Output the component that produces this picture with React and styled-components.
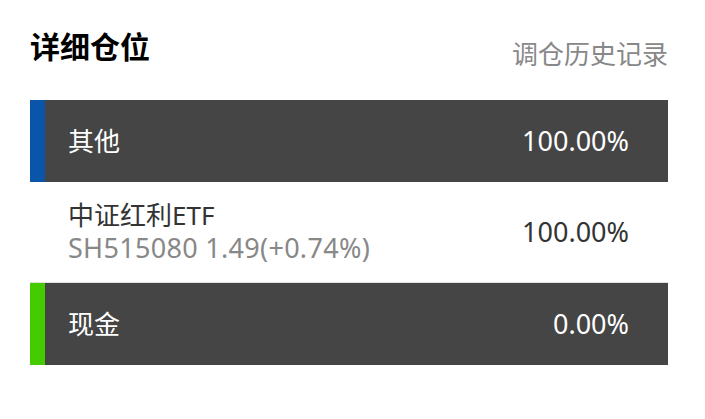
import React from 'react';
import styled, { createGlobalStyle } from 'styled-components';

const GlobalStyle = createGlobalStyle`
  html, body {
    margin: 0;
    padding: 0;
    background: #ffffff;
  }
  body {
    font-family: "Noto Sans", "Noto Sans CJK SC", sans-serif;
  }
`;

const Page = styled.div`
  width: 705px;
  height: 419px;
  padding: 0 37px 0 30px;
  box-sizing: border-box;
  background: #fff;
`;

const Header = styled.div`
  display: flex;
  justify-content: space-between;
  align-items: flex-start;
  height: 100px;
  padding-top: 32px;
  box-sizing: border-box;
`;

const Title = styled.h2`
  margin: 0;
  font-size: 30px;
  line-height: 30px;
  font-weight: 700;
  color: #000;
`;

const HistoryLink = styled.a`
  margin-top: 9px;
  font-size: 26px;
  line-height: 26px;
  color: #888;
  text-decoration: none;
  cursor: pointer;
`;

const GroupRow = styled.div`
  display: flex;
  align-items: center;
  justify-content: space-between;
  height: 82px;
  padding: 0 39px 0 23px;
  background: #454545;
  border-left: 15px solid ${(p) => p.$accent};
  color: #fff;
  font-size: 26px;
  line-height: 32px;
`;

const StockRow = styled.div`
  display: flex;
  align-items: center;
  justify-content: space-between;
  height: 101px;
  padding: 0 39px 0 38px;
  box-sizing: border-box;
  border-bottom: 1px solid #e0e0e0;
  color: #333;
  font-size: 26px;
  line-height: 32px;
`;

const StockInfo = styled.div`
  display: flex;
  flex-direction: column;
`;

const StockName = styled.span`
  color: #333;
  line-height: 31px;
`;

const StockQuote = styled.span`
  color: #888;
  font-size: 27px;
  line-height: 33px;
  letter-spacing: 0.3px;
`;

const Percent = styled.span`
  font-size: 27px;
`;

const groups = [
  {
    name: '其他',
    accent: '#0a55a9',
    percent: '100.00%',
    stocks: [
      { name: '中证红利ETF', quote: 'SH515080 1.49(+0.74%)', percent: '100.00%' },
    ],
  },
  { name: '现金', accent: '#44cc00', percent: '0.00%', stocks: [] },
];

export default function App() {
  return (
    <Page>
      <GlobalStyle />
      <Header>
        <Title>详细仓位</Title>
        <HistoryLink>调仓历史记录</HistoryLink>
      </Header>
      {groups.map((g) => (
        <React.Fragment key={g.name}>
          <GroupRow $accent={g.accent}>
            <span>{g.name}</span>
            <Percent>{g.percent}</Percent>
          </GroupRow>
          {g.stocks.map((s) => (
            <StockRow key={s.quote}>
              <StockInfo>
                <StockName>{s.name}</StockName>
                <StockQuote>{s.quote}</StockQuote>
              </StockInfo>
              <Percent>{s.percent}</Percent>
            </StockRow>
          ))}
        </React.Fragment>
      ))}
    </Page>
  );
}
